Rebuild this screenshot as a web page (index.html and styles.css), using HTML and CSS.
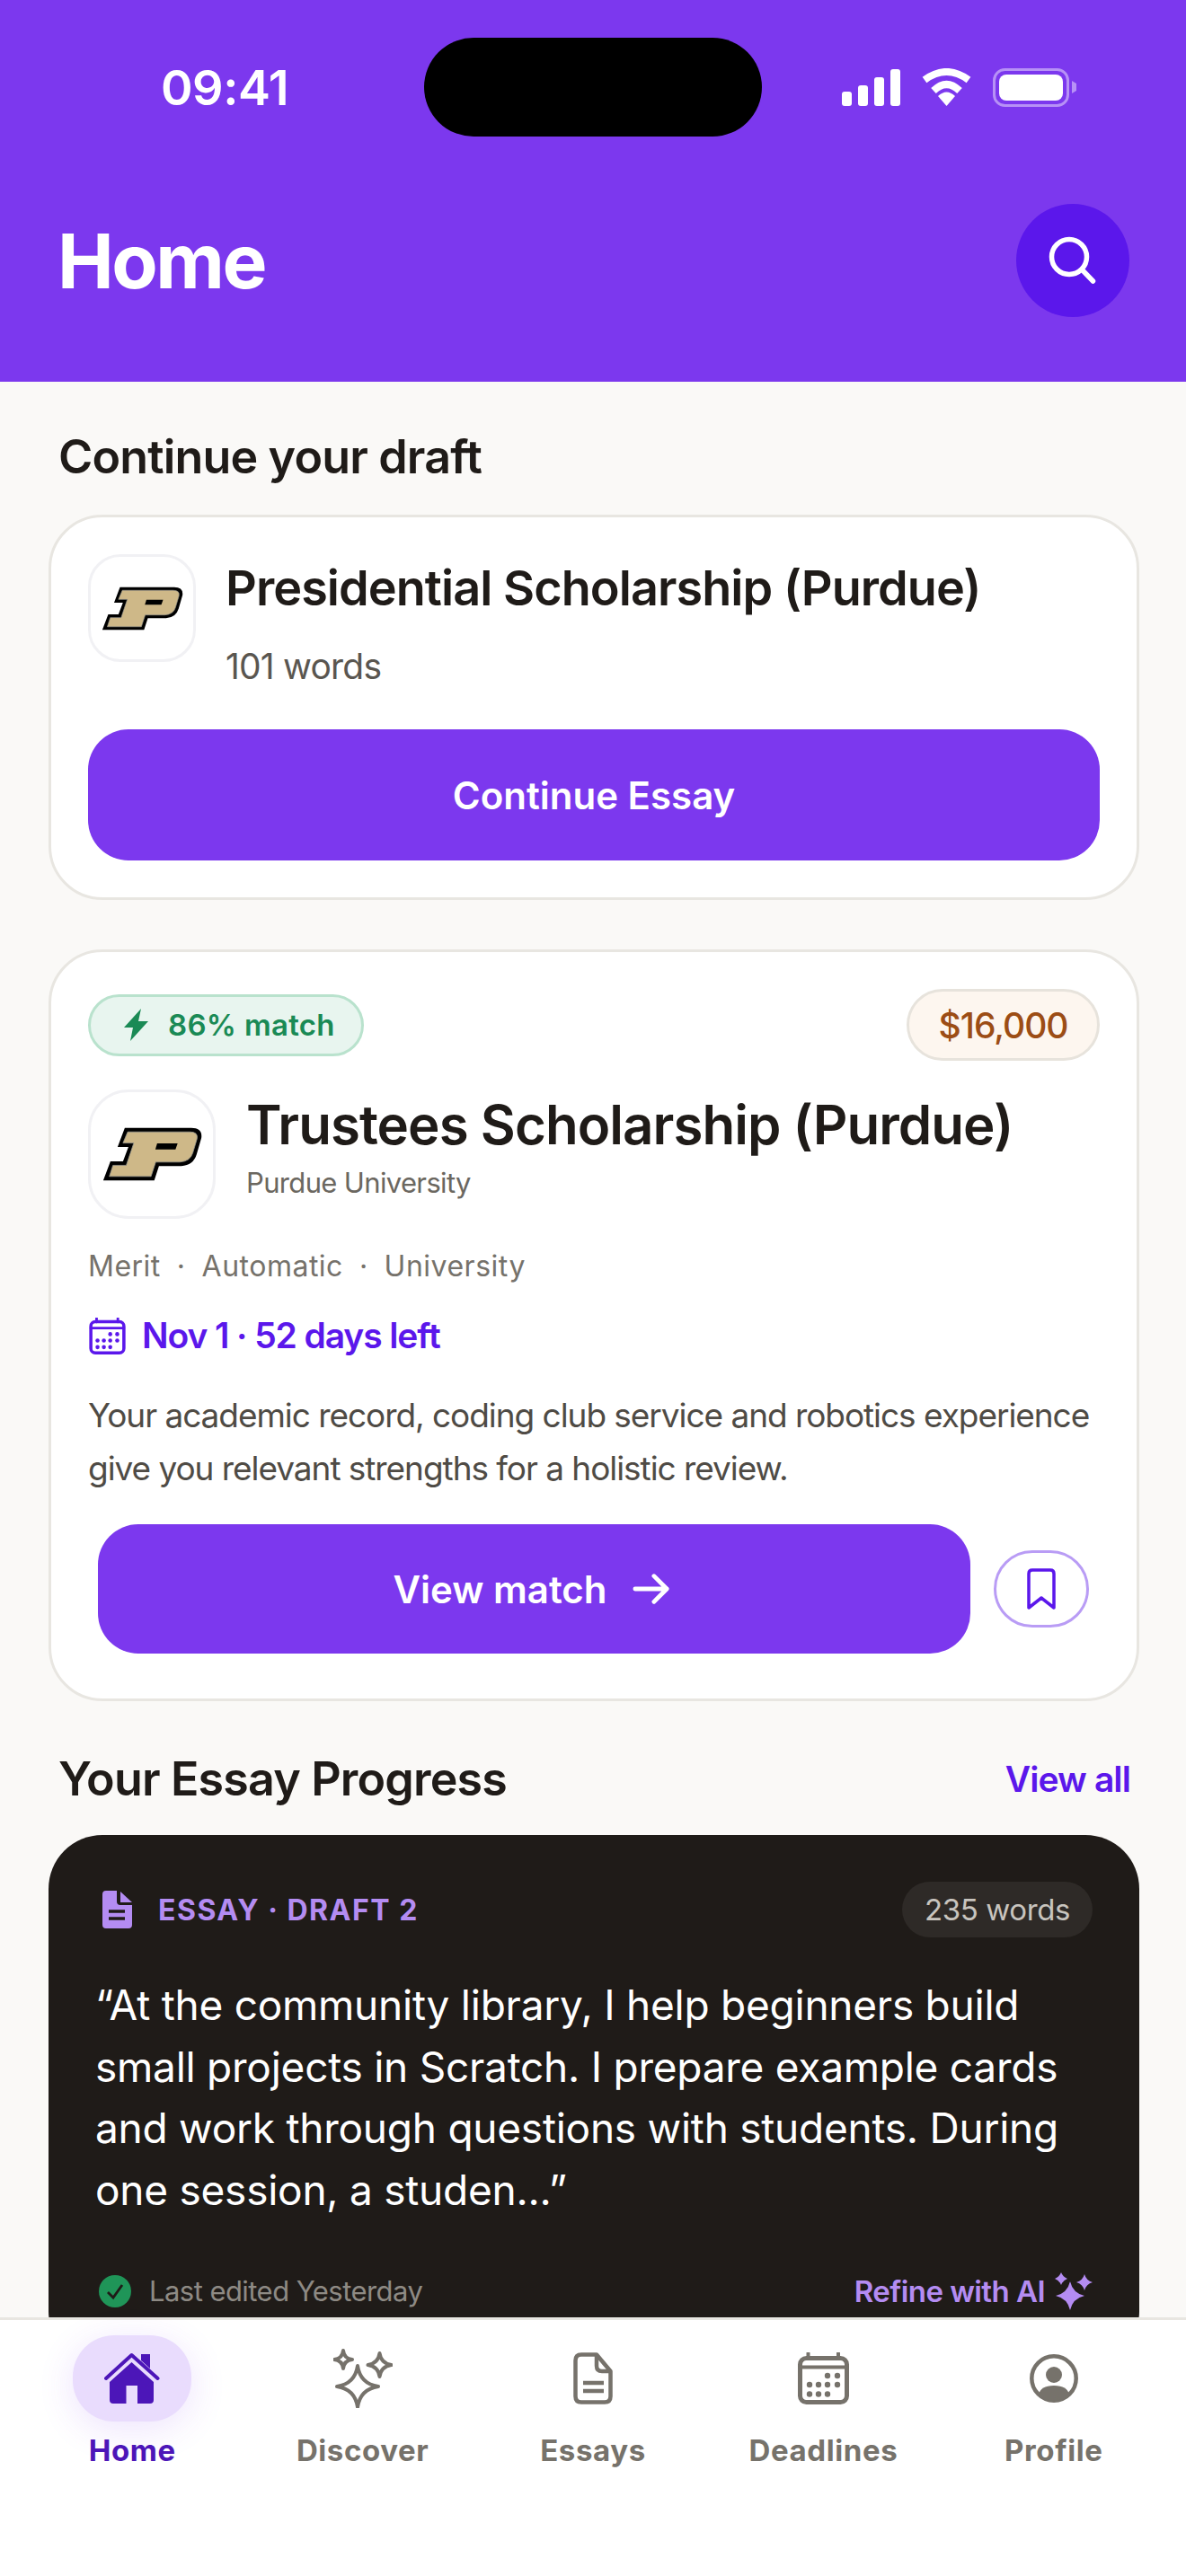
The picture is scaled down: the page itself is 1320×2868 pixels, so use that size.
FILE: index.html
```html
<!DOCTYPE html>
<html lang="en">
<head>
    <meta charset="UTF-8">
    <title>Home</title>
    <link rel="stylesheet" href="styles.css">
</head>
<body>

<svg class="defs" width="0" height="0">
    <symbol id="purdue" viewBox="93 150 277 150">
        <path fill="#000" d="M155 152H340Q372 152 368 180L355 225Q346 256 312 258H250L237 298H95L115 245H150L165 205H135Z"/>
        <path fill="#ceb888" stroke="#9a9a92" stroke-width="2" d="M163 163H336Q360 163 356 182L344 222Q337 245 308 247H241L228 287H112L122 256H159L180 194H150Z"/>
        <path fill="#000" d="M245 195H302L296 212H240Z"/>
    </symbol>
    <symbol id="calendar" viewBox="0 0 57 58">
        <rect x="2.5" y="6.5" width="52" height="49" rx="7" fill="none" stroke="currentColor" stroke-width="5"/>
        <path d="M2.5 16.5H54.5M11.5 1V7M45 1V7" fill="none" stroke="currentColor" stroke-width="4" stroke-linecap="round"/>
        <g fill="currentColor">
            <circle cx="33" cy="26" r="3.2"/><circle cx="44" cy="26" r="3.2"/>
            <circle cx="13" cy="36" r="3.2"/><circle cx="23" cy="36" r="3.2"/><circle cx="33" cy="36" r="3.2"/><circle cx="44" cy="36" r="3.2"/>
            <circle cx="13" cy="46.500" r="3.2"/><circle cx="23" cy="46.500" r="3.2"/><circle cx="33" cy="46.500" r="3.2"/>
        </g>
    </symbol>
</svg>

<div class="phone">
    <header class="top">
        <div class="status">
            <span class="time">09:41</span>
            <svg class="status-icons" width="261" height="43" viewBox="0 0 261 43">
                <g fill="#fff">
                    <rect x="0" y="26" width="11" height="16" rx="3"/>
                    <rect x="18" y="19" width="11" height="23" rx="3"/>
                    <rect x="36" y="10" width="11" height="32" rx="3"/>
                    <rect x="54" y="1" width="11" height="41" rx="3"/>
                    <path d="M107 31Q116.500 22 126 31L116.500 42Z"/>
                    <rect x="175" y="7" width="71" height="29" rx="8"/>
                </g>
                <path d="M92 13Q116.500 -5 141 13M102 25Q116.500 11 131 25" fill="none" stroke="#fff" stroke-width="8"/>
                <rect x="169.500" y="1.500" width="82" height="40" rx="12" fill="none" stroke="#fff" stroke-opacity=".45" stroke-width="3"/>
                <path d="M256 14L261 17V25L256 28Z" fill="#fff" fill-opacity=".45"/>
            </svg>
        </div>
        <div class="notch"></div>
        <div class="title-row">
            <h1>Home</h1>
            <button class="search">
                <svg width="60" height="60" viewBox="0 0 60 60" fill="none" stroke="#fff" stroke-width="5.500" stroke-linecap="round">
                    <circle cx="26" cy="26" r="19.500"/>
                    <path d="M40.500 40.500L52.500 53"/>
                </svg>
            </button>
        </div>
    </header>

    <main class="content">
        <div class="section-head first">
            <h2>Continue your draft</h2>
        </div>

        <section class="card draft">
            <div class="draft-row">
                <div class="logo small"><svg width="91" height="49"><use href="#purdue"/></svg></div>
                <div class="draft-text">
                    <h3 class="draft-title">Presidential Scholarship (Purdue)</h3>
                    <p class="draft-words">101 words</p>
                </div>
            </div>
            <button class="btn wide">Continue Essay</button>
        </section>

        <section class="card match">
            <div class="badges">
                <span class="badge-match">
                    <svg width="27" height="36" viewBox="0 0 27 36"><path fill="#1a8a55" d="M19 0L0 21H10L7 36L27 14H16Z"/></svg>
                    86% match
                </span>
                <span class="badge-amount">$16,000</span>
            </div>
            <div class="match-head">
                <div class="logo large"><svg width="111" height="60"><use href="#purdue"/></svg></div>
                <div class="match-text">
                    <h3 class="match-title">Trustees Scholarship (Purdue)</h3>
                    <p class="match-school">Purdue University</p>
                </div>
            </div>
            <p class="tags">Merit<i>·</i>Automatic<i>·</i>University</p>
            <p class="due">
                <svg width="41" height="41"><use href="#calendar"/></svg>
                Nov 1 · 52 days left
            </p>
            <p class="why">Your academic record, coding club service and robotics experience give you relevant strengths for a holistic review.</p>
            <div class="actions">
                <button class="btn grow">
                    View match
                    <svg width="42" height="36" viewBox="0 0 44 36" fill="none" stroke="#fff" stroke-width="5" stroke-linecap="round" stroke-linejoin="round">
                        <path d="M3 18H40M25 3L40 18L25 33"/>
                    </svg>
                </button>
                <button class="save">
                    <svg width="32" height="46" viewBox="0 0 32 46" fill="none" stroke="#5b17eb" stroke-width="3.500" stroke-linejoin="round">
                        <path d="M2 6Q2 2 6 2H26Q30 2 30 6V44L16 33L2 44Z"/>
                    </svg>
                </button>
            </div>
        </section>

        <div class="section-head second">
            <h2>Your Essay Progress</h2>
            <a class="view-all">View all</a>
        </div>

        <section class="essay">
            <div class="essay-top">
                <span class="essay-label">
                    <svg width="33" height="42" viewBox="0 0 33 42">
                        <path fill="#b48cf2" d="M4 0H16V12Q16 16 20 16H33V38Q33 42 29 42H4Q0 42 0 38V4Q0 0 4 0Z"/>
                        <path fill="#b48cf2" d="M20 1L33 13H20Z"/>
                        <path stroke="#1f1b18" stroke-width="3.500" d="M7 23H25M7 31H25"/>
                    </svg>
                    ESSAY · DRAFT 2
                </span>
                <span class="essay-count">235 words</span>
            </div>
            <p class="essay-quote">“At the community library, I help beginners build small projects in Scratch. I prepare example cards and work through questions with students. During one session, a studen...”</p>
            <div class="essay-foot">
                <span class="edited">
                    <svg width="36" height="36" viewBox="0 0 36 36">
                        <circle cx="18" cy="18" r="18" fill="#1f9558"/>
                        <path d="M10 19L16 25L26 11" fill="none" stroke="#1f1b18" stroke-width="2.800"/>
                    </svg>
                    Last edited Yesterday
                </span>
                <span class="refine">
                    Refine with AI
                    <svg width="43" height="42" viewBox="0 0 43 42" fill="#b48cf2">
                        <path d="M18 10Q21 23 34 26Q21 29 18 42Q15 29 2 26Q15 23 18 10Z"/>
                        <path d="M8 0Q10 5 15 7Q10 9 8 14Q6 9 1 7Q6 5 8 0Z"/>
                        <path d="M34 2Q36 9 43 11Q36 13 34 20Q32 13 25 11Q32 9 34 2Z"/>
                    </svg>
                </span>
            </div>
        </section>
    </main>

    <nav class="tabs">
        <a class="tab active">
            <span class="tab-icon">
                <svg width="62" height="58" viewBox="0 0 62 58" fill="currentColor">
                    <path d="M2 29L30.500 3L59.500 29" fill="none" stroke="currentColor" stroke-width="4" stroke-linecap="round" stroke-linejoin="round"/>
                    <path d="M41 2H51V18L41 9Z"/>
                    <path d="M30.500 11L55 33V53Q55 57 51 57H37V37H24.500V57H10Q6 57 6 53V33Z"/>
                </svg>
            </span>
            Home
        </a>
        <a class="tab">
            <span class="tab-icon">
                <svg width="66" height="66" viewBox="0 0 66 66" fill="none" stroke="currentColor" stroke-width="4" stroke-linejoin="round">
                    <path d="M27 19Q30 39 50 42Q30 45 27 65Q24 45 4 42Q24 39 27 19Z"/>
                    <path d="M11 2Q12 11 21 12Q12 13 11 22Q10 13 1 12Q10 11 11 2Z"/>
                    <path d="M51.500 5Q53 16 64.500 18Q53 20 51.500 31Q50 20 38.500 18Q50 16 51.500 5Z"/>
                </svg>
            </span>
            Discover
        </a>
        <a class="tab">
            <span class="tab-icon">
                <svg width="44" height="58" viewBox="0 0 44 58" fill="none" stroke="currentColor" stroke-width="4.500" stroke-linejoin="round">
                    <path d="M9 2.500H26L41.500 21V49Q41.500 55.500 35 55.500H9Q2.500 55.500 2.500 49V9Q2.500 2.500 9 2.500Z"/>
                    <path d="M26 2.500V15Q26 21 32 21H41.500"/>
                    <path d="M11 34H34M11 43H34"/>
                </svg>
            </span>
            Essays
        </a>
        <a class="tab">
            <span class="tab-icon"><svg width="57" height="58"><use href="#calendar"/></svg></span>
            Deadlines
        </a>
        <a class="tab">
            <span class="tab-icon">
                <svg width="54" height="54" viewBox="0 0 54 54" fill="currentColor">
                    <circle cx="27" cy="27" r="24.700" fill="none" stroke="currentColor" stroke-width="4.500"/>
                    <circle cx="27" cy="23" r="9"/>
                    <path d="M10 45Q12 35 27 35Q42 35 44 45Q37 52 27 52Q17 52 10 45Z"/>
                </svg>
            </span>
            Profile
        </a>
    </nav>
</div>

</body>
</html>
```

FILE: styles.css
```css
:root {
    --purple: #7c38ee;
    --purple-deep: #5b17eb;
    --ink: #1f1b18;
    --line: #e8e6e1;
    --lilac: #b48cf2;
    --muted: #76726b;
}

* {
    box-sizing: border-box;
}

body {
    margin: 0;
    font-family: Inter, "Noto Sans", sans-serif;
    color: var(--ink);
    background: #faf9f7;
}

h1, h2, h3, p {
    margin: 0;
}

button {
    border: none;
    padding: 0;
    font-family: inherit;
    cursor: pointer;
}

.defs {
    position: absolute;
}

.phone {
    width: 1320px;
    height: 2868px;
    display: flex;
    flex-direction: column;
    overflow: hidden;
}

/* purple header */
.top {
    position: relative;
    height: 425px;
    flex: none;
    background: var(--purple);
    color: #fff;
}

.status {
    height: 194px;
    padding: 0 122px 0 179px;
    display: flex;
    align-items: center;
    justify-content: space-between;
}

.time {
    font-size: 54px;
    font-weight: 600;
    letter-spacing: -0.500px;
}

.notch {
    position: absolute;
    top: 42px;
    left: 472px;
    width: 376px;
    height: 110px;
    border-radius: 55px;
    background: #000;
}

.title-row {
    margin-top: 33px;
    padding: 0 63px 0 64px;
    display: flex;
    align-items: center;
    justify-content: space-between;
}

.title-row h1 {
    font-size: 84px;
    font-weight: 700;
    letter-spacing: -2.500px;
}

.search {
    width: 126px;
    height: 126px;
    border-radius: 50%;
    background: var(--purple-deep);
    display: flex;
    align-items: center;
    justify-content: center;
}

/* scrolling part */
.content {
    flex: 1;
    min-height: 0;
    overflow: hidden;
    padding: 53px 52px 0 54px;
}

.section-head {
    padding: 0 10px 0 11px;
    height: 60px;
    display: flex;
    align-items: center;
    justify-content: space-between;
}

.section-head h2 {
    font-size: 52px;
    font-weight: 600;
    letter-spacing: -0.850px;
}

.section-head.second {
    margin-top: 56px;
}

.view-all {
    font-size: 39px;
    font-weight: 600;
    letter-spacing: -0.900px;
    color: var(--purple-deep);
}

.card {
    background: #fff;
    border: 3px solid var(--line);
    border-radius: 60px;
    padding: 41px;
}

.draft {
    margin-top: 35px;
}

.draft-row {
    display: flex;
    gap: 33px;
}

.logo {
    flex: none;
    display: flex;
    align-items: center;
    justify-content: center;
    border: 3px solid #f1f1f4;
    background: #fff;
}

.logo.small {
    width: 120px;
    height: 120px;
    border-radius: 36px;
}

.logo.large {
    width: 142px;
    height: 144px;
    border-radius: 45px;
}

.draft-text {
    padding-top: 3px;
}

.draft-title {
    font-size: 54px;
    font-weight: 600;
    line-height: 70px;
    letter-spacing: -0.950px;
}

.draft-words {
    margin-top: 26px;
    font-size: 39px;
    line-height: 52px;
    letter-spacing: -0.800px;
    color: #5a5650;
}

.btn {
    height: 146px;
    border-radius: 45px;
    background: var(--purple);
    color: #fff;
    font-size: 42px;
    font-weight: 600;
    display: flex;
    align-items: center;
    justify-content: center;
}

.btn.wide {
    width: 100%;
    margin-top: 44px;
}

.btn.grow {
    flex: 1;
    height: 144px;
    gap: 28px;
    padding-right: 6px;
}

.match {
    margin-top: 55px;
    padding-bottom: 50px;
}

.badges {
    height: 80px;
    display: flex;
    align-items: center;
    justify-content: space-between;
}

.badge-match {
    height: 69px;
    width: 307px;
    padding-left: 37px;
    display: flex;
    align-items: center;
    gap: 22px;
    border: 3px solid #b9e2cd;
    border-radius: 35px;
    background: #e8f5ef;
    color: #1a8a55;
    font-size: 33px;
    font-weight: 600;
    letter-spacing: 0.300px;
}

.badge-amount {
    height: 80px;
    width: 215px;
    display: flex;
    align-items: center;
    justify-content: center;
    border: 3px solid #e7e3dc;
    border-radius: 40px;
    background: #fdf6ef;
    color: #9c4d15;
    font-size: 39px;
    font-weight: 500;
    letter-spacing: -1px;
}

.match-head {
    margin-top: 32px;
    display: flex;
    gap: 34px;
}

.match-text {
    padding-top: 4px;
}

.match-title {
    font-size: 60px;
    font-weight: 600;
    line-height: 70px;
    letter-spacing: -0.950px;
}

.match-school {
    margin-top: 7px;
    font-size: 31px;
    line-height: 46px;
    letter-spacing: -0.650px;
    color: #6b6760;
}

.tags {
    margin-top: 31px;
    font-size: 32px;
    line-height: 44px;
    letter-spacing: 0.500px;
    color: var(--muted);
}

.tags i {
    font-style: normal;
    margin: 0 18px;
}

.due {
    margin-top: 30px;
    display: flex;
    align-items: center;
    gap: 18px;
    font-size: 39px;
    font-weight: 600;
    line-height: 50px;
    letter-spacing: -1.100px;
    color: var(--purple-deep);
}

.due svg {
    margin-left: 1px;
}

.why {
    margin-top: 35px;
    font-size: 37px;
    line-height: 58.500px;
    letter-spacing: -1.050px;
    color: #4f4b45;
}

.actions {
    margin-top: 33px;
    padding: 0 12px 0 11px;
    display: flex;
    align-items: center;
    gap: 26px;
}

.save {
    flex: none;
    width: 106px;
    height: 86px;
    border-radius: 43px;
    border: 3px solid #b99cf5;
    background: #fff;
    display: flex;
    align-items: center;
    justify-content: center;
}

/* dark essay card */
.essay {
    margin-top: 33px;
    padding: 52px 52px 60px;
    border-radius: 60px;
    background: var(--ink);
    color: #fff;
}

.essay-top {
    height: 62px;
    display: flex;
    align-items: center;
    justify-content: space-between;
    padding-left: 8px;
}

.essay-label {
    display: flex;
    align-items: center;
    gap: 29px;
    font-size: 32px;
    font-weight: 700;
    letter-spacing: 1.500px;
    color: var(--lilac);
}

.essay-count {
    width: 212px;
    height: 62px;
    display: flex;
    align-items: center;
    justify-content: center;
    border-radius: 31px;
    background: #2e2a27;
    color: #c8c4be;
    font-size: 33px;
    letter-spacing: -0.400px;
}

.essay-quote {
    margin-top: 41px;
    font-size: 46px;
    line-height: 68.700px;
    letter-spacing: -0.250px;
}

.essay-foot {
    margin-top: 56px;
    height: 44px;
    padding-left: 4px;
    display: flex;
    align-items: center;
    justify-content: space-between;
}

.edited {
    display: flex;
    align-items: center;
    gap: 20px;
    font-size: 31px;
    letter-spacing: -0.550px;
    color: #8e8a84;
}

.refine {
    display: flex;
    align-items: center;
    gap: 10px;
    font-size: 33px;
    font-weight: 600;
    letter-spacing: -0.550px;
    color: var(--lilac);
}

/* bottom tabs */
.tabs {
    height: 288px;
    flex: none;
    padding: 17px 19px 0;
    display: grid;
    grid-template-columns: repeat(5, 1fr);
    align-items: start;
    background: #fff;
    border-top: 3px solid var(--line);
}

.tab {
    display: flex;
    flex-direction: column;
    align-items: center;
    font-size: 33px;
    font-weight: 700;
    line-height: 44px;
    letter-spacing: 0.600px;
    color: var(--muted);
}

.tab-icon {
    width: 132px;
    height: 96px;
    margin-bottom: 10px;
    display: flex;
    align-items: center;
    justify-content: center;
    border-radius: 46px;
}

.tab.active {
    color: #4c16b8;
}

.tab.active .tab-icon {
    background: #e9dcfd;
    box-shadow: 0 8px 40px rgba(124, 55, 240, 0.14);
}
```
